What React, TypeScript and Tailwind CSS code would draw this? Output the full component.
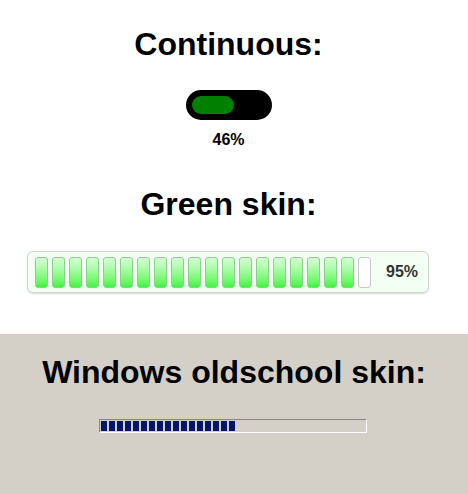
import React from "react";

const greenTotal = 20;
const greenFilled = 19;
const oldBlocks = 17;

export default function App() {
  return (
    <div className="min-h-screen flex flex-col font-['Liberation_Sans',Arial,sans-serif] text-black">
      {/* Continuous + green skin */}
      <div className="bg-white pt-[26px] pb-[41px] pr-[11px] flex flex-col items-center">
        <h1 className="text-[32px] leading-[37px] font-bold">Continuous:</h1>
        <div className="mt-[27px] w-[86px] h-[30px] rounded-full bg-black p-[6px]">
          <div className="w-[42px] h-[18px] rounded-full bg-[#008000]" />
        </div>
        <p className="mt-[11px] text-[16px] leading-[18px] font-bold">46%</p>

        <h1 className="mt-[37px] text-[32px] leading-[37px] font-bold">Green skin:</h1>
        <div className="mt-[28px] self-stretch ml-[27px] mr-[28px] h-[42px] rounded-[6px] border border-[#cfd8cf] bg-[#f2fff2] shadow-[0_1px_2px_rgba(0,0,0,0.15)] flex items-center pl-[7px]">
          <div className="flex gap-[4px]">
            {Array.from({ length: greenTotal }).map((_, i) => (
              <div
                key={i}
                className={
                  i < greenFilled
                    ? "w-[13px] h-[31px] rounded-[3px] border border-[#8ccf8c] bg-gradient-to-b from-[#d6ffd6] to-[#3cf53c]"
                    : "w-[13px] h-[31px] rounded-[3px] border border-[#c8c8c8] bg-white"
                }
              />
            ))}
          </div>
          <span className="ml-[15px] text-[16px] font-bold text-[#333]">95%</span>
        </div>
      </div>

      {/* Windows oldschool */}
      <div className="flex-1 bg-[#d4d0c8] pt-[20px] flex flex-col items-center">
        <h1 className="text-[32px] leading-[37px] font-bold">Windows oldschool skin:</h1>
        <div className="mt-[28px] -ml-[2px] w-[268px] h-[14px] border border-t-[#8a8783] border-l-[#8a8783] border-b-white border-r-white p-[1px] flex gap-[2px]">
          {Array.from({ length: oldBlocks }).map((_, i) => (
            <div key={i} className="w-[6px] h-[10px] bg-[#001468]" />
          ))}
        </div>
      </div>
    </div>
  );
}
